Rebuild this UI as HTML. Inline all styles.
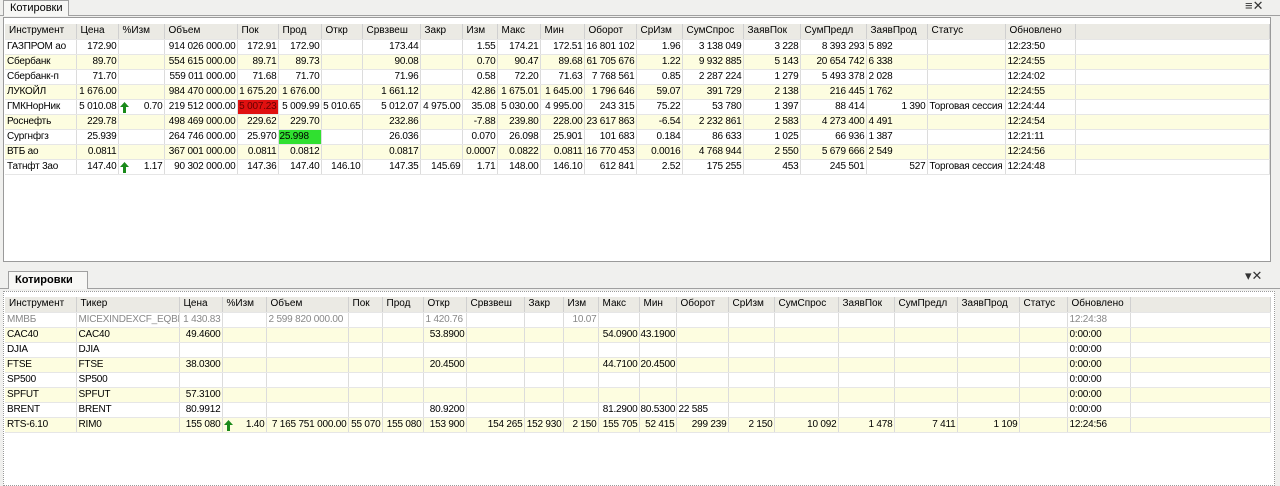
<!DOCTYPE html>
<html><head><meta charset="utf-8"><style>
*{margin:0;padding:0;box-sizing:border-box}
body{width:1280px;height:481px;background:#f0f0ee;font-family:"Liberation Sans",Tahoma,sans-serif;font-size:10px;color:#000;position:relative;overflow:hidden}
.tab{position:absolute;height:16px;background:#f7f7f5;border:1px solid #a0a0a0;border-bottom:none;padding:1px 6px;font-size:11px}
.frame{position:absolute;background:#fff;border:1px solid #9a9a9a}
table{border-collapse:collapse;table-layout:fixed;position:absolute}
td{height:15px;border-right:1px solid #dcdcdc;border-bottom:1px solid #e6e6e6;white-space:nowrap;overflow:hidden;padding:0 1px;text-align:right;line-height:14px;letter-spacing:-0.2px}
tr.h td{background:#ebeae4;text-align:left;padding-left:4px;border-right:1px solid #d0d0d0;letter-spacing:0}
tr.y td{background:#fdfde0}
td.l{text-align:left;padding-left:2px}
.g{color:#888}
.ar{float:left;margin-top:2px}
.ctl{position:absolute;font-size:13px;color:#333}
</style></head><body>
<div style="position:absolute;left:0;top:15px;width:1280px;height:1px;background:#a0a0a0"></div>
<div class="tab" style="left:3px;top:0;width:66px">Котировки</div>
<div class="ctl" style="left:1245px;top:-2px">&#8801;&#x2715;</div>
<div class="frame" style="left:3px;top:17px;width:1268px;height:245px"></div>
<table style="left:5px;top:24px;width:1265px">
<colgroup><col style="width:71px"><col style="width:42px"><col style="width:46px"><col style="width:73px"><col style="width:41px"><col style="width:43px"><col style="width:41px"><col style="width:58px"><col style="width:42px"><col style="width:35px"><col style="width:43px"><col style="width:44px"><col style="width:52px"><col style="width:46px"><col style="width:61px"><col style="width:57px"><col style="width:66px"><col style="width:61px"><col style="width:78px"><col style="width:70px"><col></colgroup>
<tr class="h"><td>Инструмент</td><td>Цена</td><td>%Изм</td><td>Объем</td><td>Пок</td><td>Прод</td><td>Откр</td><td>Срвзвеш</td><td>Закр</td><td>Изм</td><td>Макс</td><td>Мин</td><td>Оборот</td><td>СрИзм</td><td>СумСпрос</td><td>ЗаявПок</td><td>СумПредл</td><td>ЗаявПрод</td><td>Статус</td><td>Обновлено</td><td></td></tr>
<tr><td class="l">ГАЗПРОМ ао</td><td>172.90</td><td></td><td>914 026 000.00</td><td>172.91</td><td>172.90</td><td></td><td>173.44</td><td></td><td>1.55</td><td>174.21</td><td>172.51</td><td>16 801 102</td><td>1.96</td><td>3 138 049</td><td>3 228</td><td>8 393 293</td><td class="l">5 892</td><td></td><td class="l">12:23:50</td><td></td></tr>
<tr class="y"><td class="l">Сбербанк</td><td>89.70</td><td></td><td>554 615 000.00</td><td>89.71</td><td>89.73</td><td></td><td>90.08</td><td></td><td>0.70</td><td>90.47</td><td>89.68</td><td>61 705 676</td><td>1.22</td><td>9 932 885</td><td>5 143</td><td>20 654 742</td><td class="l">6 338</td><td></td><td class="l">12:24:55</td><td></td></tr>
<tr><td class="l">Сбербанк-п</td><td>71.70</td><td></td><td>559 011 000.00</td><td>71.68</td><td>71.70</td><td></td><td>71.96</td><td></td><td>0.58</td><td>72.20</td><td>71.63</td><td>7 768 561</td><td>0.85</td><td>2 287 224</td><td>1 279</td><td>5 493 378</td><td class="l">2 028</td><td></td><td class="l">12:24:02</td><td></td></tr>
<tr class="y"><td class="l">ЛУКОЙЛ</td><td>1 676.00</td><td></td><td>984 470 000.00</td><td>1 675.20</td><td>1 676.00</td><td></td><td>1 661.12</td><td></td><td>42.86</td><td>1 675.01</td><td>1 645.00</td><td>1 796 646</td><td>59.07</td><td>391 729</td><td>2 138</td><td>216 445</td><td class="l">1 762</td><td></td><td class="l">12:24:55</td><td></td></tr>
<tr><td class="l">ГМКНорНик</td><td>5 010.08</td><td><svg class="ar" width="9" height="11" viewBox="0 0 9 11"><path d="M4.5 0L9 5H6v6H3V5H0z" fill="#1a8a1a"/></svg>0.70</td><td>219 512 000.00</td><td style="background:#e01010;color:#600">5 007.23</td><td>5 009.99</td><td>5 010.65</td><td>5 012.07</td><td>4 975.00</td><td>35.08</td><td>5 030.00</td><td>4 995.00</td><td>243 315</td><td>75.22</td><td>53 780</td><td>1 397</td><td>88 414</td><td>1 390</td><td class="l">Торговая сессия</td><td class="l">12:24:44</td><td></td></tr>
<tr class="y"><td class="l">Роснефть</td><td>229.78</td><td></td><td>498 469 000.00</td><td>229.62</td><td>229.70</td><td></td><td>232.86</td><td></td><td>-7.88</td><td>239.80</td><td>228.00</td><td>23 617 863</td><td>-6.54</td><td>2 232 861</td><td>2 583</td><td>4 273 400</td><td class="l">4 491</td><td></td><td class="l">12:24:54</td><td></td></tr>
<tr><td class="l">Сургнфгз</td><td>25.939</td><td></td><td>264 746 000.00</td><td>25.970</td><td style="background:#30e030;text-align:left">25.998</td><td></td><td>26.036</td><td></td><td>0.070</td><td>26.098</td><td>25.901</td><td>101 683</td><td>0.184</td><td>86 633</td><td>1 025</td><td>66 936</td><td class="l">1 387</td><td></td><td class="l">12:21:11</td><td></td></tr>
<tr class="y"><td class="l">ВТБ ао</td><td>0.0811</td><td></td><td>367 001 000.00</td><td>0.0811</td><td>0.0812</td><td></td><td>0.0817</td><td></td><td>0.0007</td><td>0.0822</td><td>0.0811</td><td>16 770 453</td><td>0.0016</td><td>4 768 944</td><td>2 550</td><td>5 679 666</td><td class="l">2 549</td><td></td><td class="l">12:24:56</td><td></td></tr>
<tr><td class="l">Татнфт 3ао</td><td>147.40</td><td><svg class="ar" width="9" height="11" viewBox="0 0 9 11"><path d="M4.5 0L9 5H6v6H3V5H0z" fill="#1a8a1a"/></svg>1.17</td><td>90 302 000.00</td><td>147.36</td><td>147.40</td><td>146.10</td><td>147.35</td><td>145.69</td><td>1.71</td><td>148.00</td><td>146.10</td><td>612 841</td><td>2.52</td><td>175 255</td><td>453</td><td>245 501</td><td>527</td><td class="l">Торговая сессия</td><td class="l">12:24:48</td><td></td></tr>
</table>

<div style="position:absolute;left:0;top:288px;width:1280px;height:1px;background:#a0a0a0"></div>
<div class="tab" style="left:8px;top:271px;width:80px;height:18px;font-weight:bold;padding-top:2px">Котировки</div>
<div class="ctl" style="left:1245px;top:268px">&#9662;&#x2715;</div>
<div class="frame" style="left:3px;top:291px;width:1272px;height:195px;border-style:dotted"></div>
<table style="left:5px;top:297px;width:1266px">
<colgroup><col style="width:71px"><col style="width:103px"><col style="width:43px"><col style="width:44px"><col style="width:82px"><col style="width:34px"><col style="width:41px"><col style="width:43px"><col style="width:58px"><col style="width:39px"><col style="width:35px"><col style="width:41px"><col style="width:37px"><col style="width:52px"><col style="width:46px"><col style="width:64px"><col style="width:56px"><col style="width:63px"><col style="width:62px"><col style="width:48px"><col style="width:63px"><col></colgroup>
<tr class="h"><td>Инструмент</td><td>Тикер</td><td>Цена</td><td>%Изм</td><td>Объем</td><td>Пок</td><td>Прод</td><td>Откр</td><td>Срвзвеш</td><td>Закр</td><td>Изм</td><td>Макс</td><td>Мин</td><td>Оборот</td><td>СрИзм</td><td>СумСпрос</td><td>ЗаявПок</td><td>СумПредл</td><td>ЗаявПрод</td><td>Статус</td><td>Обновлено</td><td></td></tr>
<tr class="g"><td class="l">ММВБ</td><td class="l">MICEXINDEXCF_EQBR</td><td>1 430.83</td><td></td><td class="l">2 599 820 000.00</td><td></td><td></td><td class="l">1 420.76</td><td></td><td></td><td>10.07</td><td></td><td></td><td></td><td></td><td></td><td></td><td></td><td></td><td></td><td class="l">12:24:38</td><td></td></tr>
<tr class="y"><td class="l">CAC40</td><td class="l">CAC40</td><td>49.4600</td><td></td><td></td><td></td><td></td><td>53.8900</td><td></td><td></td><td></td><td>54.0900</td><td>43.1900</td><td></td><td></td><td></td><td></td><td></td><td></td><td></td><td class="l">0:00:00</td><td></td></tr>
<tr><td class="l">DJIA</td><td class="l">DJIA</td><td></td><td></td><td></td><td></td><td></td><td></td><td></td><td></td><td></td><td></td><td></td><td></td><td></td><td></td><td></td><td></td><td></td><td></td><td class="l">0:00:00</td><td></td></tr>
<tr class="y"><td class="l">FTSE</td><td class="l">FTSE</td><td>38.0300</td><td></td><td></td><td></td><td></td><td>20.4500</td><td></td><td></td><td></td><td>44.7100</td><td>20.4500</td><td></td><td></td><td></td><td></td><td></td><td></td><td></td><td class="l">0:00:00</td><td></td></tr>
<tr><td class="l">SP500</td><td class="l">SP500</td><td></td><td></td><td></td><td></td><td></td><td></td><td></td><td></td><td></td><td></td><td></td><td></td><td></td><td></td><td></td><td></td><td></td><td></td><td class="l">0:00:00</td><td></td></tr>
<tr class="y"><td class="l">SPFUT</td><td class="l">SPFUT</td><td>57.3100</td><td></td><td></td><td></td><td></td><td></td><td></td><td></td><td></td><td></td><td></td><td></td><td></td><td></td><td></td><td></td><td></td><td></td><td class="l">0:00:00</td><td></td></tr>
<tr><td class="l">BRENT</td><td class="l">BRENT</td><td>80.9912</td><td></td><td></td><td></td><td></td><td>80.9200</td><td></td><td></td><td></td><td>81.2900</td><td>80.5300</td><td class="l">22 585</td><td></td><td></td><td></td><td></td><td></td><td></td><td class="l">0:00:00</td><td></td></tr>
<tr class="y"><td class="l">RTS-6.10</td><td class="l">RIM0</td><td>155 080</td><td><svg class="ar" width="9" height="11" viewBox="0 0 9 11"><path d="M4.5 0L9 5H6v6H3V5H0z" fill="#1a8a1a"/></svg>1.40</td><td>7 165 751 000.00</td><td>55 070</td><td>155 080</td><td>153 900</td><td>154 265</td><td>152 930</td><td>2 150</td><td>155 705</td><td>52 415</td><td>299 239</td><td>2 150</td><td>10 092</td><td>1 478</td><td>7 411</td><td>1 109</td><td></td><td class="l">12:24:56</td><td></td></tr>
</table>
</body></html>
